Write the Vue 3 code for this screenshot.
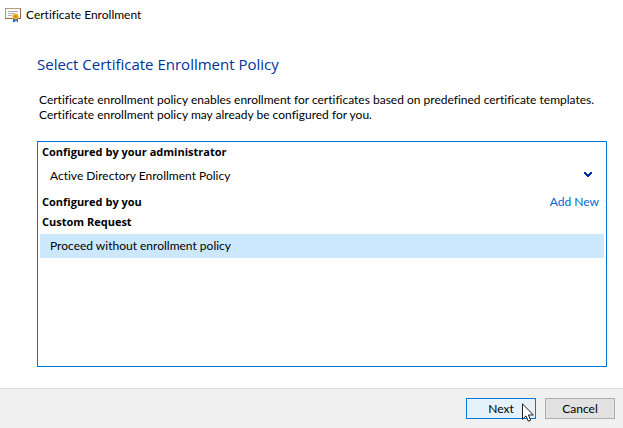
<script setup>
import { ref } from 'vue'

const selected = ref('custom')
</script>

<template>
  <div class="wizard">
    <header class="titlebar">
      <svg class="cert" viewBox="0 0 16 16" aria-hidden="true">
        <rect x="0.5" y="2.5" width="15" height="10" fill="#fbfaf7" stroke="#b39a7c" />
        <path d="M0 12.5h16M15.5 3v10" stroke="#8b6b4c" fill="none" />
        <path d="M3 5.5h10M3 7.5h6M3 9.5h4" stroke="#a9b0c4" />
        <path d="M8 10v6h2l1-2 1 2h1v-6z" fill="#2463d9" />
        <circle cx="10.5" cy="10.5" r="3" fill="#f0ad1c" />
        <circle cx="10.5" cy="10.5" r="1.2" fill="#c8850c" />
      </svg>
      <span>Certificate Enrollment</span>
    </header>

    <main class="page">
      <h1>Select Certificate Enrollment Policy</h1>
      <p class="intro">
        Certificate enrollment policy enables enrollment for certificates based on predefined certificate templates.<br />
        Certificate enrollment policy may already be configured for you.
      </p>

      <section class="policies" aria-label="Enrollment policies">
        <h2>Configured by your administrator</h2>
        <button class="policy" :class="{ selected: selected === 'ad' }" @click="selected = 'ad'">
          <span>Active Directory Enrollment Policy</span>
          <svg class="chevron" viewBox="0 0 8 6" aria-hidden="true">
            <path d="M0 0h2v1h1v1h2v-1h1v-1h2v2h-1v1h-1v1h-1v1h-2v-1h-1v-1h-1v-1h-1z" fill="#003399" />
          </svg>
        </button>
        <div class="group">
          <h2>Configured by you</h2>
          <a href="#">Add New</a>
        </div>
        <h2>Custom Request</h2>
        <button class="policy" :class="{ selected: selected === 'custom' }" @click="selected = 'custom'">
          <span>Proceed without enrollment policy</span>
        </button>
      </section>
    </main>

    <footer class="actions">
      <button class="action primary">
        Next
        <svg class="pointer" viewBox="0 0 12 19" aria-hidden="true">
          <path d="M0.5 0.8v15.5l3.500-3.400 2.300 5.300 2.400-1-2.300-5.200h4.900z" fill="#fff" stroke="#1c1c2c" />
        </svg>
      </button>
      <button class="action">Cancel</button>
    </footer>
  </div>
</template>

<style>
body {
  margin: 0;
  background: #fff;
}
</style>

<style scoped>
.wizard {
  display: flex;
  flex-direction: column;
  min-height: 100vh;
  color: #000;
  font: 12px/15px Lato, "Open Sans", sans-serif;
  font-variant-ligatures: none;
}

.titlebar {
  display: flex;
  align-items: center;
  gap: 5px;
  height: 28px;
  padding: 0 5px 2px;
}

.cert {
  width: 16px;
  height: 16px;
}

.page {
  display: flex;
  flex: 1;
  flex-direction: column;
  padding: 24px 16px 21px 37px;
}

h1 {
  margin: 0;
  color: #003399;
  font-family: "Open Sans", sans-serif;
  font-size: 15px;
  font-weight: 400;
  line-height: 20px;
}

.intro {
  margin: 18px 0 19px;
  padding-left: 2px;
  white-space: nowrap;
}

.policies {
  display: flex;
  flex: 1;
  flex-direction: column;
  padding: 0 2px 2px;
  border: 1px solid #0078d7;
}

h2 {
  margin: 0;
  padding-left: 2px;
  font-family: "Open Sans", sans-serif;
  font-size: 11px;
  font-weight: 700;
  line-height: 20px;
}

.policy {
  display: flex;
  align-items: center;
  justify-content: space-between;
  height: 24px;
  margin: 2px 0 4px;
  padding: 0 12px 2px 10px;
  border: 0;
  background: transparent;
  color: inherit;
  font: inherit;
}

.policy.selected {
  background: #cce8ff;
}

.chevron {
  width: 8px;
  height: 6px;
}

.group {
  display: flex;
  align-items: center;
  justify-content: space-between;
  padding-right: 5px;
}

.group a {
  padding-bottom: 2px;
  color: #0066cc;
  text-decoration: none;
}

.actions {
  display: flex;
  justify-content: flex-end;
  gap: 9px;
  padding: 9px 8px;
  border-top: 1px solid #dfdfdf;
  background: #f0f0f0;
}

.action {
  position: relative;
  width: 70px;
  height: 21px;
  padding: 0;
  border: 1px solid #adadad;
  background: #e1e1e1;
  color: inherit;
  font: inherit;
}

.action.primary {
  border-color: #0078d7;
  background: #e5f1fb;
}

.pointer {
  position: absolute;
  top: 4px;
  left: 55px;
  width: 12px;
  height: 19px;
}
</style>
